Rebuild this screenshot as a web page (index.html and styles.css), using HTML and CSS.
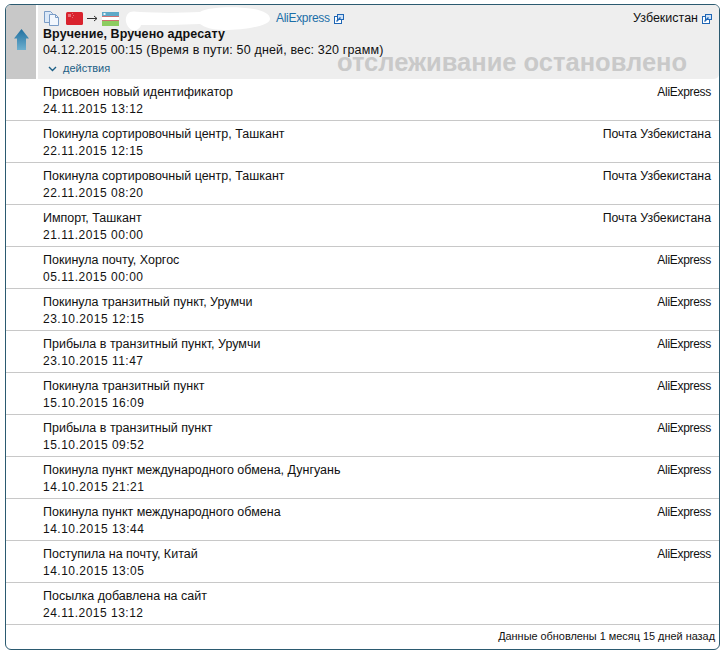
FILE: index.html
```html
<!DOCTYPE html>
<html lang="ru">
<head>
<meta charset="utf-8">
<title>Отслеживание</title>
<link rel="stylesheet" href="styles.css">
</head>
<body>
<div class="card">
  <div class="head">
    <div class="side">
      <svg width="15" height="21" viewBox="0 0 15 21"><defs><linearGradient id="ag" x1="0" y1="0" x2="0" y2="1"><stop offset="0" stop-color="#1f6f9f"/><stop offset="1" stop-color="#6fb0cf"/></linearGradient></defs><path d="M7.500 0 L15 9.500 L12 9.500 L12 21 L3 21 L3 9.500 L0 9.500 Z" fill="url(#ag)"/></svg>
    </div>
    <div class="main">
      <div class="top">
        <svg class="copy" width="17" height="17" viewBox="0 0 17 17"><path d="M1.500 1.500H7.500L9.500 3.500V12.500H1.500Z" fill="#dbe8f7" stroke="#7a9cc6"/><path d="M6.500 4.500H12.500L15.500 7.500V15.500H6.500Z" fill="#f2f7fd" stroke="#7a9cc6"/><path d="M12.500 4.500V7.500H15.500" fill="none" stroke="#7a9cc6"/></svg>
        <svg class="flag" width="17" height="13" viewBox="0 0 17 13"><rect width="17" height="13" rx="1.500" fill="#d9232e"/><path d="M2 2h3v3h-3z" fill="#e8707a"/><path d="M6 1h1v1h-1zM7 3h1v1h-1zM6 5h1v1h-1z" fill="#e8707a"/></svg>
        <svg class="arrow" width="11" height="7" viewBox="0 0 11 7"><path d="M0 3.500H10M7 1L10 3.500L7 6" fill="none" stroke="#333" stroke-width="1"/></svg>
        <svg class="flag" width="17" height="14" viewBox="0 0 17 14"><rect width="17" height="14" fill="#fff"/><rect width="17" height="4" fill="#5fa9c8"/><rect y="9" width="17" height="5" fill="#8ccc60"/><rect y="4" width="17" height="1" fill="#d07070"/><rect y="8" width="17" height="1" fill="#d07070"/><path d="M1.500 1h2v2h-2z" fill="#e8f4fa"/></svg>
        <svg class="blob" width="146" height="24" viewBox="0 0 146 24"><path d="M3 8C5 4 9 4 16 5C35 6 55 6 76 5C84 0 110 -1 130 2C140 4 146 7 146 12C146 19 120 23 100 23C88 23 80 20 76 17C55 18 38 18 17 18C16 22 12 24 8 23C3 21 0 13 3 8Z" fill="#fff"/></svg>
        <a class="link">AliExpress</a>
        <svg class="ext" width="10" height="10" viewBox="0 0 10 10"><rect x="0.500" y="2.500" width="7" height="7" fill="#fff" stroke="#1f66b5"/><rect x="3.500" y="0.500" width="6" height="5" fill="#cfe2f7" stroke="#1f66b5"/><path d="M2.500 7.500L6.500 3.500" stroke="#1f66b5" stroke-width="1.500"/></svg>
        <span class="country">Узбекистан</span>
        <svg class="ext" width="10" height="10" viewBox="0 0 10 10"><rect x="0.500" y="2.500" width="7" height="7" fill="#fff" stroke="#1f66b5"/><rect x="3.500" y="0.500" width="6" height="5" fill="#cfe2f7" stroke="#1f66b5"/><path d="M2.500 7.500L6.500 3.500" stroke="#1f66b5" stroke-width="1.500"/></svg>
      </div>
      <div class="status">Вручение, Вручено адресату</div>
      <div class="line">04.12.2015 00:15 (Время в пути: 50 дней, вес: 320 грамм)</div>
      <div class="actions">
        <svg width="9" height="6" viewBox="0 0 9 6"><path d="M1 1L4.500 4.500L8 1" fill="none" stroke="#1c5f86" stroke-width="1.400"/></svg>
        <span>действия</span>
      </div>
      <div class="stopped">отслеживание остановлено</div>
    </div>
  </div>
  <div class="row"><div>Присвоен новый идентификатор<br><span class="date">24.11.2015 13:12</span></div><div class="ali">AliExpress</div></div>
  <div class="row"><div>Покинула сортировочный центр, Ташкант<br><span class="date">22.11.2015 12:15</span></div><div class="post">Почта Узбекистана</div></div>
  <div class="row"><div>Покинула сортировочный центр, Ташкант<br><span class="date">22.11.2015 08:20</span></div><div class="post">Почта Узбекистана</div></div>
  <div class="row"><div>Импорт, Ташкант<br><span class="date">21.11.2015 00:00</span></div><div class="post">Почта Узбекистана</div></div>
  <div class="row"><div>Покинула почту, Хоргос<br><span class="date">05.11.2015 00:00</span></div><div class="ali">AliExpress</div></div>
  <div class="row"><div>Покинула транзитный пункт, Урумчи<br><span class="date">23.10.2015 12:15</span></div><div class="ali">AliExpress</div></div>
  <div class="row"><div>Прибыла в транзитный пункт, Урумчи<br><span class="date">23.10.2015 11:47</span></div><div class="ali">AliExpress</div></div>
  <div class="row"><div>Покинула транзитный пункт<br><span class="date">15.10.2015 16:09</span></div><div class="ali">AliExpress</div></div>
  <div class="row"><div>Прибыла в транзитный пункт<br><span class="date">15.10.2015 09:52</span></div><div class="ali">AliExpress</div></div>
  <div class="row"><div>Покинула пункт международного обмена, Дунгуань<br><span class="date">14.10.2015 21:21</span></div><div class="ali">AliExpress</div></div>
  <div class="row"><div>Покинула пункт международного обмена<br><span class="date">14.10.2015 13:44</span></div><div class="ali">AliExpress</div></div>
  <div class="row"><div>Поступила на почту, Китай<br><span class="date">14.10.2015 13:05</span></div><div class="ali">AliExpress</div></div>
  <div class="row"><div>Посылка добавлена на сайт<br><span class="date">24.11.2015 13:12</span></div><div></div></div>
  <div class="foot">Данные обновлены 1 месяц 15 дней назад</div>
</div>
</body>
</html>
```
FILE: styles.css
```css
html, body { margin: 0; padding: 0; background: #fff; }
body { padding: 4px 5px 0; font: 12.500px/17px "Liberation Sans", Arial, sans-serif; color: #111; }
.card { width: 713px; height: 644px; border: 1px solid #2b5a70; border-radius: 6px; overflow: hidden; }
.head { display: flex; height: 74px; }
.side { width: 30px; box-sizing: border-box; padding-bottom: 5px; background: #c8c8c8; display: flex; align-items: center; justify-content: center; margin-right: 2px; }
.main { position: relative; flex: 1; background: #eee; border-radius: 0 0 5px 0; padding: 5px 7px 0 5px; }
.top { display: flex; align-items: center; height: 17px; }
.copy { margin-right: 6px; }
.flag { flex: none; }
.arrow { flex: none; margin: 0 4px; }
.blob { flex: none; margin: -4px 6px -4px 5px; }
.link { color: #1c6fa8; font-size: 12px; letter-spacing: -0.300px; }
.ext { margin-left: 4px; }
.country { margin-left: auto; }
.status { font-weight: bold; margin-top: -1px; letter-spacing: 0.080px; }
.line { height: 17px; margin-top: -1px; letter-spacing: 0.150px; }
.actions { display: flex; align-items: center; gap: 6px; margin: 1px 0 0 5px; color: #1c5f86; font-size: 11px; height: 17px; }
.stopped { position: absolute; left: 299px; top: 42px; font: bold 25.500px/30px "Liberation Sans", Arial, sans-serif; color: #c9c9c9; white-space: nowrap; }
.row { display: flex; justify-content: space-between; height: 42px; padding: 5px 8px 0 37px; box-sizing: border-box; border-bottom: 1px solid #c8c8c8; }
.date { font-size: 12px; letter-spacing: 0.500px; }
.ali { font-size: 12px; letter-spacing: -0.300px; }
.post { font-size: 12.300px; }
.foot { text-align: right; font-size: 10.900px; padding: 3px 4px 0 0; line-height: 17px; }
```
